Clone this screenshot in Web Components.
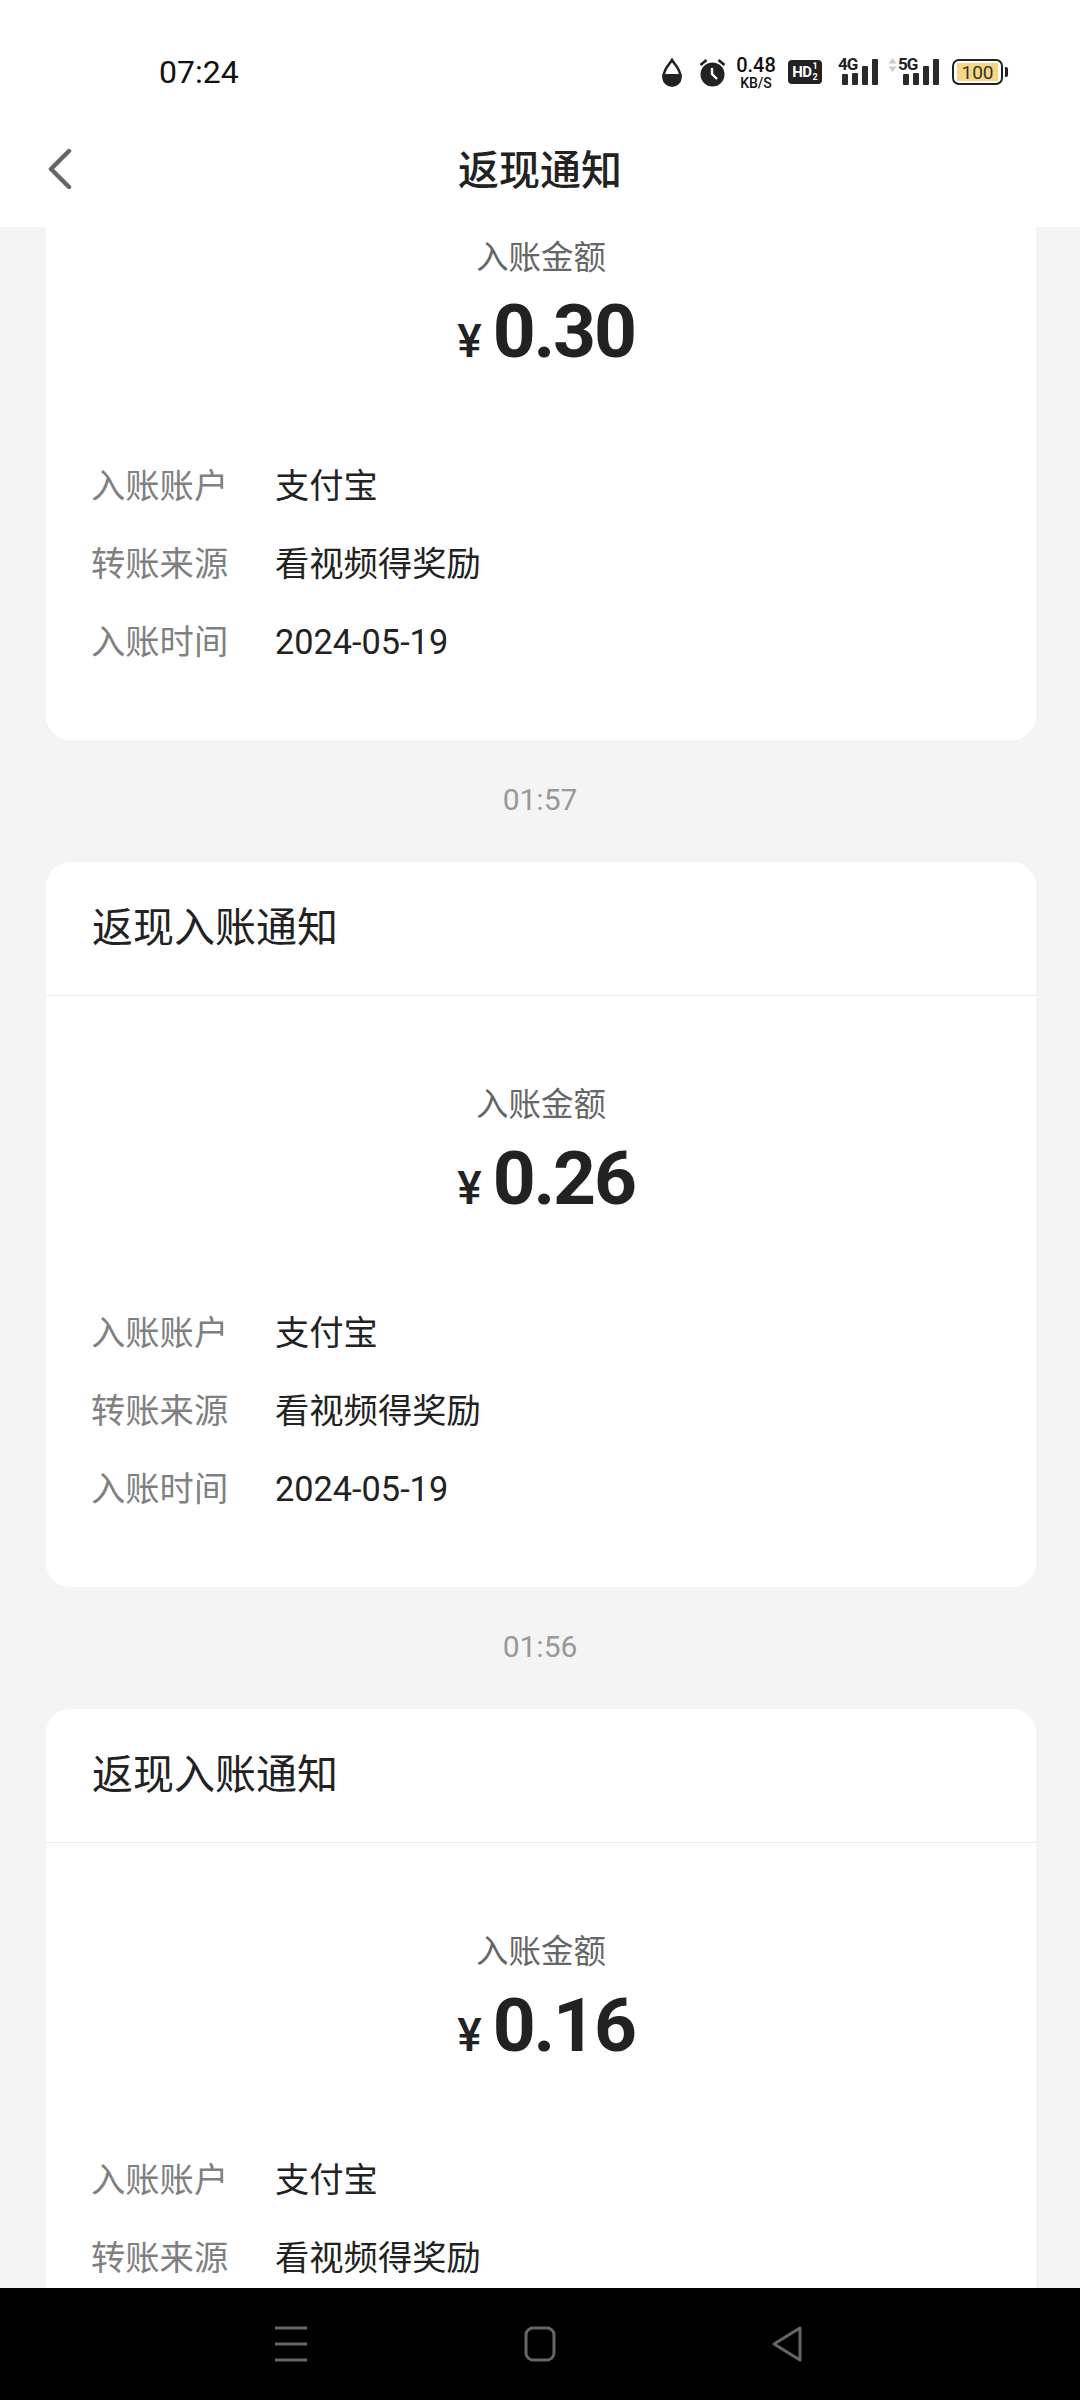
<!DOCTYPE html>
<html lang="zh">
<head>
<meta charset="utf-8">
<title>返现通知</title>
<style>
  html, body { margin: 0; padding: 0; }
  body {
    width: 1080px;
    height: 2400px;
    overflow: hidden;
    font-family: "Noto Sans CJK SC", "Noto Sans", sans-serif;
  }
</style>
</head>
<body>
<app-page>
  <notice-card amount="0.30" scrolled></notice-card>
  <time-label>01:57</time-label>
  <notice-card amount="0.26"></notice-card>
  <time-label>01:56</time-label>
  <notice-card amount="0.16"></notice-card>
</app-page>

<script>
class SignalBars extends HTMLElement {
  constructor() {
    super();
    this.shadowDOM = this.attachShadow({ mode: "open" });
  }

  connectedCallback() {
    const five = this.hasAttribute("roaming");
    this.shadowDOM.innerHTML = `
    <style>
      :host {
        display: block;
        position: relative;
        width: ${five ? 50 : 40}px;
        height: 28px;
        font-family: Roboto, sans-serif;
        color: #222;
      }
      svg { position: absolute; display: block; }
      .bars { left: ${five ? 15 : 4}px; top: 1px; }
      .arrows { left: 0; top: 0; }
      span {
        position: absolute;
        left: ${five ? 10 : 0}px;
        top: -4px;
        font-size: 17px;
        font-weight: 700;
        line-height: 20px;
        letter-spacing: -1px;
      }
    </style>
    ${five ? `<svg class="arrows" width="9" height="14" viewBox="0 0 9 14" fill="#ccc">
      <path d="M4.5 0 L8.5 5.5 H.5Z M4.5 14 L8.5 8.5 H.5Z"/>
    </svg>` : ""}
    <svg class="bars" width="36" height="27" viewBox="0 0 36 27" fill="#2a2a2a">
      <rect x="0" y="15" width="6" height="11" rx="1"/>
      <rect x="10" y="14" width="6" height="12" rx="1"/>
      <rect x="20" y="7" width="6" height="19" rx="1"/>
      <rect x="30" y="0" width="6" height="26" rx="1"/>
    </svg>
    <span>${this.getAttribute("label")}</span>
    `;
  }
}

class StatusBar extends HTMLElement {
  constructor() {
    super();
    this.shadowDOM = this.attachShadow({ mode: "open" });
  }

  connectedCallback() {
    this.shadowDOM.innerHTML = `
    <style>
      :host {
        display: flex;
        align-items: center;
        justify-content: space-between;
        height: 112px;
        padding: 32px 77px 0 159px;
        box-sizing: border-box;
        background: #fff;
        color: #111;
        font-family: Roboto, sans-serif;
      }
      .time { font-size: 32px; }
      .icons { display: flex; align-items: center; }
      svg { display: block; }
      .speed {
        display: flex;
        flex-direction: column;
        align-items: center;
        width: 42px;
        margin-left: 9px;
        font-weight: 500;
      }
      .speed b { font-size: 20px; font-weight: 500; height: 22px; line-height: 22px; }
      .speed span { font-size: 14px; height: 15px; line-height: 15px; }
      .hd {
        display: flex;
        align-items: center;
        justify-content: center;
        gap: 1px;
        width: 34px;
        height: 24px;
        margin-left: 11px;
        background: #222;
        border-radius: 4px;
        color: #fff;
        font-size: 15px;
        font-weight: 700;
        letter-spacing: -.5px;
      }
      .frac {
        display: flex;
        flex-direction: column;
        font-size: 9px;
        line-height: 11px;
        letter-spacing: 0;
      }
      signal-bars { margin-left: 16px; }
      signal-bars + signal-bars { margin-left: 10px; }
      .battery {
        display: flex;
        align-items: center;
        justify-content: center;
        position: relative;
        width: 51px;
        height: 26px;
        margin-left: 14px;
        box-sizing: border-box;
        border: 2px solid #222;
        border-radius: 7px;
        font-size: 19px;
        color: #333;
        background: linear-gradient(#f6d682, #f6d682) center / 41px 18px no-repeat;
      }
      .battery::after {
        content: "";
        position: absolute;
        right: -7px;
        top: 6px;
        width: 3px;
        height: 10px;
        background: #222;
        border-radius: 0 2px 2px 0;
      }
    </style>
    <span class="time">07:24</span>
    <div class="icons">
      <svg width="20" height="29" viewBox="0 0 20 29">
        <path d="M10 2 C7 7 1.5 11 1.5 19 a8.5 8.5 0 0 0 17 0 C18.500 11 13 7 10 2Z" fill="none" stroke="#222" stroke-width="2.6"/>
        <path d="M.5 16 H19.500 V19 a9.500 9.500 0 0 1 -19 0Z" fill="#222"/>
      </svg>
      <svg width="27" height="29" viewBox="0 0 27 29" style="margin-left:17px">
        <circle cx="13.500" cy="16.500" r="12" fill="#222"/>
        <path d="M13 10 V16 L18 21" fill="none" stroke="#fff" stroke-width="2.4"/>
        <path d="M1.500 7 L7.500 2 M25.500 7 L19.500 2" stroke="#222" stroke-width="2.8"/>
      </svg>
      <div class="speed"><b>0.48</b><span>KB/S</span></div>
      <div class="hd">HD<div class="frac"><span>1</span><span>2</span></div></div>
      <signal-bars label="4G"></signal-bars>
      <signal-bars label="5G" roaming></signal-bars>
      <div class="battery">100</div>
    </div>
    `;
  }
}

class NavHeader extends HTMLElement {
  constructor() {
    super();
    this.shadowDOM = this.attachShadow({ mode: "open" });
  }

  connectedCallback() {
    this.shadowDOM.innerHTML = `
    <style>
      :host {
        display: flex;
        align-items: center;
        height: 115px;
        padding: 0 0 2px 48px;
        box-sizing: border-box;
        background: #fff;
        color: #222;
      }
      svg { display: block; }
      h1 {
        flex: 1;
        margin: -3px 0 0 -24px;
        padding-right: 48px;
        text-align: center;
        font-size: 41px;
        font-weight: 500;
        line-height: 56px;
      }
    </style>
    <svg width="24" height="40" viewBox="0 0 24 40">
      <path d="M21 2 L3 20 L21 38" fill="none" stroke="#666" stroke-width="4.500" stroke-linecap="round" stroke-linejoin="round"/>
    </svg>
    <h1>返现通知</h1>
    `;
  }
}

class InfoRow extends HTMLElement {
  constructor() {
    super();
    this.shadowDOM = this.attachShadow({ mode: "open" });
  }

  connectedCallback() {
    this.shadowDOM.innerHTML = `
    <style>
      :host {
        display: flex;
        align-items: center;
        height: 78px;
        margin-left: -1px;
        font-size: 34.3px;
        color: #222;
      }
      .label { width: 184px; color: #808080; }
    </style>
    <span class="label">${this.getAttribute("label")}</span>
    <span><slot></slot></span>
    `;
  }
}

class NoticeCard extends HTMLElement {
  constructor() {
    super();
    this.shadowDOM = this.attachShadow({ mode: "open" });
  }

  connectedCallback() {
    // the first card is scrolled so far up that its title is out of sight
    const head = this.hasAttribute("scrolled") ? "" : "<header>返现入账通知</header>";
    this.shadowDOM.innerHTML = `
    <style>
      :host {
        display: block;
        margin: 0 44px 0 46px;
        background: #fff;
        border-radius: 24px;
        color: #222;
      }
      :host([scrolled]) { border-radius: 0 0 24px 24px; }
      header {
        height: 134px;
        padding: 0 0 9px 46px;
        box-sizing: border-box;
        border-bottom: 1px solid #ececec;
        display: flex;
        align-items: center;
        font-size: 41px;
      }
      .body { padding: 82px 46px 62px; }
      .caption {
        height: 48px;
        line-height: 48px;
        text-align: center;
        font-size: 32.5px;
        color: #666;
      }
      .amount {
        display: flex;
        justify-content: center;
        align-items: baseline;
        height: 100px;
        margin-top: 2px;
        padding-left: 10px;
        line-height: 100px;
        font-family: Roboto, sans-serif;
        font-weight: 700;
        font-size: 75px;
        letter-spacing: -2.2px;
      }
      .amount small { font-size: 46px; margin-right: 11px; letter-spacing: 0; font-weight: 500; }
      .rows { margin-top: 63px; }
    </style>
    ${head}
    <div class="body">
      <div class="caption">入账金额</div>
      <div class="amount"><small>¥</small>${this.getAttribute("amount")}</div>
      <div class="rows">
        <info-row label="入账账户">支付宝</info-row>
        <info-row label="转账来源">看视频得奖励</info-row>
        <info-row label="入账时间"><span style="font-family:Roboto,sans-serif">2024-05-19</span></info-row>
      </div>
    </div>
    `;
  }
}

class TimeLabel extends HTMLElement {
  constructor() {
    super();
    this.shadowDOM = this.attachShadow({ mode: "open" });
  }

  connectedCallback() {
    this.shadowDOM.innerHTML = `
    <style>
      :host {
        display: flex;
        align-items: center;
        justify-content: center;
        height: 122px;
        padding-bottom: 3px;
        box-sizing: border-box;
        font-family: Roboto, sans-serif;
        font-size: 30px;
        color: #999;
      }
    </style>
    <slot></slot>
    `;
  }
}

class SystemNav extends HTMLElement {
  constructor() {
    super();
    this.shadowDOM = this.attachShadow({ mode: "open" });
  }

  connectedCallback() {
    this.shadowDOM.innerHTML = `
    <style>
      :host {
        display: flex;
        align-items: center;
        justify-content: space-between;
        height: 112px;
        padding: 0 278px 0 274px;
        box-sizing: border-box;
        background: #000;
      }
      svg { display: block; }
    </style>
    <svg width="34" height="36" viewBox="0 0 34 36" stroke="#666" stroke-width="3">
      <path d="M1 2 H33 M1 18 H33 M1 34 H33"/>
    </svg>
    <svg width="32" height="36" viewBox="0 0 32 36" fill="none" stroke="#666" stroke-width="3">
      <rect x="2" y="2" width="28" height="32" rx="7"/>
    </svg>
    <svg width="30" height="36" viewBox="0 0 30 36" fill="none" stroke="#666" stroke-width="3" stroke-linejoin="round">
      <path d="M28 2 V34 L2 18Z"/>
    </svg>
    `;
  }
}

class AppPage extends HTMLElement {
  constructor() {
    super();
    this.shadowDOM = this.attachShadow({ mode: "open" });
  }

  connectedCallback() {
    this.shadowDOM.innerHTML = `
    <style>
      :host {
        display: flex;
        flex-direction: column;
        width: 1080px;
        height: 2400px;
        background: #f4f4f4;
      }
      main { flex: 1; overflow: hidden; min-height: 0; }
      .list { margin-top: -78px; }
    </style>
    <status-bar></status-bar>
    <nav-header></nav-header>
    <main><div class="list"><slot></slot></div></main>
    <system-nav></system-nav>
    `;
  }
}

customElements.define("signal-bars", SignalBars);
customElements.define("status-bar", StatusBar);
customElements.define("nav-header", NavHeader);
customElements.define("info-row", InfoRow);
customElements.define("notice-card", NoticeCard);
customElements.define("time-label", TimeLabel);
customElements.define("system-nav", SystemNav);
customElements.define("app-page", AppPage);
</script>
</body>
</html>
